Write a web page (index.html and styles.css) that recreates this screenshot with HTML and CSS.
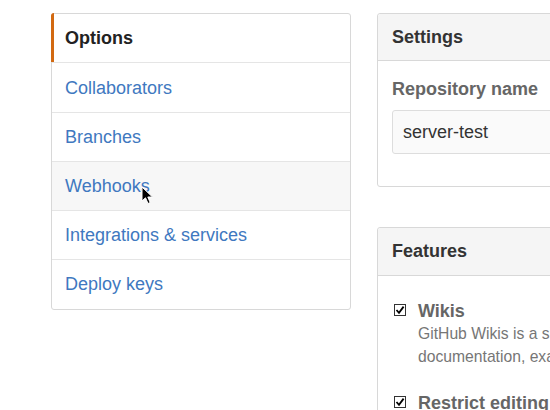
FILE: index.html
```html
<!DOCTYPE html>
<html>
<head>
<meta charset="utf-8">
<link rel="stylesheet" href="styles.css">
</head>
<body>
<div class="page">
  <nav class="menu">
    <a class="menu-item selected">Options</a>
    <a class="menu-item tall">Collaborators</a>
    <a class="menu-item">Branches</a>
    <a class="menu-item hover">Webhooks<svg class="cursor" width="13" height="20" viewBox="0 0 13 20"><path d="M1 1 L1 15 L4.5 11.8 L7 17.5 L9.2 16.5 L6.8 11 L11.5 11 Z" fill="#000" stroke="#fff" stroke-width="1" stroke-linejoin="round"/></svg></a>
    <a class="menu-item">Integrations &amp; services</a>
    <a class="menu-item last">Deploy keys</a>
  </nav>
  <div class="main">
    <section class="box settings">
      <h2 class="box-header">Settings</h2>
      <div class="box-body">
        <label class="label">Repository name</label>
        <div class="input">server-test</div>
      </div>
    </section>
    <section class="box features">
      <h2 class="box-header">Features</h2>
      <div class="box-body feat-body">
        <div class="feature">
          <svg class="check" width="12" height="12" viewBox="0 0 12 12"><rect x="0.5" y="0.5" width="11" height="11" fill="#fff" stroke="#333"/><path d="M2.5 6 L5 8.8 L9.6 2.6" fill="none" stroke="#000" stroke-width="1.8"/></svg>
          <div class="feat-text">
            <div class="feat-title">Wikis</div>
            <p class="feat-desc"><span class="line">GitHub Wikis is a simple way to let others contribute content. Any GitHub user can create and edit pages to use for</span><span class="line">documentation, examples, support, or anything you wish.</span></p>
          </div>
        </div>
        <div class="feature">
          <svg class="check" width="12" height="12" viewBox="0 0 12 12"><rect x="0.5" y="0.5" width="11" height="11" fill="#fff" stroke="#333"/><path d="M2.5 6 L5 8.8 L9.6 2.6" fill="none" stroke="#000" stroke-width="1.8"/></svg>
          <div class="feat-text">
            <div class="feat-title">Restrict editing to collaborators only</div>
          </div>
        </div>
      </div>
    </section>
  </div>
</div>
</body>
</html>
```
FILE: styles.css
```css
html, body {
  margin: 0;
  padding: 0;
  background: #fff;
  overflow: hidden;
  width: 550px;
  height: 410px;
}
body {
  font-family: "Liberation Sans", Arial, sans-serif;
  font-size: 18px;
  color: #333;
}
.page {
  display: flex;
  align-items: flex-start;
  gap: 26px;
  padding: 13px 0 0 51px;
  width: 1400px;
}
.menu {
  width: 298px;
  flex: none;
  border: 1px solid #d8d8d8;
  border-radius: 3px;
  display: flex;
  flex-direction: column;
}
.menu-item {
  position: relative;
  display: block;
  padding: 13px 13px 13px 13px;
  line-height: 22px;
  height: 22px;
  color: #4078c0;
  border-bottom: 1px solid #e5e5e5;
  text-decoration: none;
  box-sizing: content-box;
}
.menu-item.tall {
  height: 23px;
  line-height: 24px;
}
.menu-item.last {
  border-bottom: none;
  height: 23px;
}
.menu-item.selected {
  font-weight: bold;
  color: #222;
}
.menu-item.selected::before {
  content: "";
  position: absolute;
  left: -1px;
  top: -1px;
  bottom: 0;
  width: 3px;
  background: #d26911;
  border-top-left-radius: 3px;
}
.menu-item.hover {
  background: #f7f7f7;
}
.cursor {
  position: absolute;
  left: 89px;
  top: 24px;
}
.main {
  display: flex;
  flex-direction: column;
  gap: 40px;
  width: 1000px;
  flex: none;
}
.box {
  border: 1px solid #d8d8d8;
  border-radius: 3px;
}
.box-header {
  margin: 0;
  background: #f5f5f5;
  border-bottom: 1px solid #d8d8d8;
  font-size: 18px;
  font-weight: bold;
  color: #333;
  padding: 12px 14px 12px 14px;
  line-height: 23px;
  border-radius: 3px 3px 0 0;
}
.settings .box-header {
  padding: 12px 14px 11px 14px;
}
.box-body {
  padding: 17px 14px 32px 14px;
}
.label {
  display: block;
  font-weight: bold;
  color: #666;
  line-height: 22px;
  margin-bottom: 10px;
}
.input {
  height: 42px;
  line-height: 42px;
  padding: 0 10px;
  background: #fafafa;
  border: 1px solid #ddd;
  border-radius: 3px;
  color: #333;
}
.feat-body {
  padding: 24px 14px 0 16px;
  display: flex;
  flex-direction: column;
  gap: 24px;
}
.feature {
  display: flex;
  gap: 12px;
  align-items: flex-start;
}
.check {
  flex: none;
  margin-top: 4px;
}
.feat-title {
  font-weight: bold;
  color: #666;
  line-height: 22px;
}
.feat-desc {
  margin: 0;
  font-size: 15.7px;
  line-height: 23px;
  color: #767676;
}
.line {
  display: block;
  white-space: nowrap;
}
```
